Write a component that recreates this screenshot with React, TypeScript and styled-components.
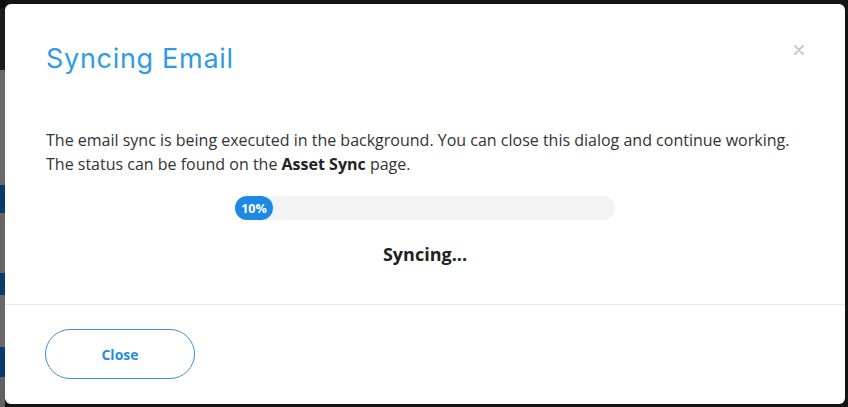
import React from "react";
import styled, { createGlobalStyle } from "styled-components";

const Global = createGlobalStyle`
  html, body { margin: 0; padding: 0; width: 100%; height: 100%; overflow: hidden; background: #121212; }
  #root { width: 100%; height: 100%; }
  * { box-sizing: border-box; }
`;

const Page = styled.div`
  display: flex;
  width: 848px;
  height: 407px;
  background: #131313;
`;

const SideStrip = styled.div`
  display: flex;
  flex-direction: column;
  width: 5px;
  height: 100%;
`;

const Band = styled.div<{ $h: number; $c: string }>`
  height: ${(p) => p.$h}px;
  flex-shrink: 0;
  background: ${(p) => p.$c};
`;

const Overlay = styled.div`
  position: fixed;
  inset: 0;
  display: flex;
  align-items: flex-start;
  justify-content: flex-start;
  padding: 4px 0 0 5px;
`;

const Dialog = styled.div`
  width: 840px;
  height: 400px;
  background: #fff;
  border-radius: 6px;
  display: flex;
  flex-direction: column;
  position: relative;
  font-family: "Open Sans", "Liberation Sans", sans-serif;
`;

const Body = styled.div`
  padding: 39px 41px 0 41px;
  display: flex;
  flex-direction: column;
  flex: 1;
`;

const Title = styled.h2`
  margin: 0;
  font-family: Inter, "Noto Sans", sans-serif;
  font-weight: 400;
  font-size: 27px;
  line-height: 32px;
  color: #2f9ae8;
  letter-spacing: 0.7px;
`;

const CloseX = styled.button`
  position: absolute;
  top: 40px;
  right: 40px;
  width: 12px;
  height: 12px;
  padding: 0;
  border: 0;
  background: transparent;
  display: flex;
  align-items: center;
  justify-content: center;
  cursor: pointer;
`;

const Message = styled.p`
  margin: 54px 0 0 0;
  font-size: 16px;
  line-height: 23.5px;
  color: #333;
  strong { font-weight: 700; color: #222; }
`;

const ProgressWrap = styled.div`
  display: flex;
  flex-direction: column;
  align-items: center;
  margin-top: 20px;
`;

const Track = styled.div`
  width: 380px;
  height: 24px;
  border-radius: 12px;
  background: #f3f3f3;
  display: flex;
`;

const Fill = styled.div`
  height: 100%;
  border-radius: 12px;
  background: #1e88e5;
  color: #fff;
  font-size: 12.5px;
  font-weight: 700;
  display: flex;
  align-items: center;
  justify-content: center;
`;

const Status = styled.div`
  margin-top: 22px;
  font-size: 18px;
  font-weight: 700;
  line-height: 24px;
  color: #222;
`;

const Footer = styled.div`
  border-top: 1px solid #e6e6e6;
  padding: 24px 40px 25px 40px;
  display: flex;
`;

const OutlineButton = styled.button`
  width: 150px;
  height: 50px;
  border-radius: 25px;
  border: 1px solid #3a8fdc;
  background: #fff;
  color: #2a8be0;
  font-family: "Open Sans", "Liberation Sans", sans-serif;
  font-weight: 700;
  font-size: 14px;
  cursor: pointer;
`;

const bands: [number, string][] = [
  [8, "#0d0d0d"],
  [62, "#1c1c1c"],
  [115, "#6a6a6a"],
  [28, "#0b3b6e"],
  [60, "#666666"],
  [22, "#0b3b6e"],
  [52, "#686868"],
  [30, "#0b3b6e"],
  [30, "#626262"],
];

export default function App() {
  const pct = 10;
  return (
    <>
      <Global />
      <Page>
        <SideStrip>
          {bands.map(([h, c], i) => (
            <Band key={i} $h={h} $c={c} />
          ))}
        </SideStrip>
      </Page>
      <Overlay>
        <Dialog>
          <CloseX aria-label="close">
            <svg width="10" height="10" viewBox="0 0 10 10">
              <path d="M1 1 L9 9 M9 1 L1 9" stroke="#c9c9c9" strokeWidth="2" strokeLinecap="round" />
            </svg>
          </CloseX>
          <Body>
            <Title>Syncing Email</Title>
            <Message>
              The email sync is being executed in the background. You can close this dialog and continue working.
              <br />
              The status can be found on the <strong>Asset Sync</strong> page.
            </Message>
            <ProgressWrap>
              <Track>
                <Fill style={{ width: `${Math.max(pct, 9.8)}%` }}>{pct}%</Fill>
              </Track>
              <Status>Syncing...</Status>
            </ProgressWrap>
          </Body>
          <Footer>
            <OutlineButton>Close</OutlineButton>
          </Footer>
        </Dialog>
      </Overlay>
    </>
  );
}
